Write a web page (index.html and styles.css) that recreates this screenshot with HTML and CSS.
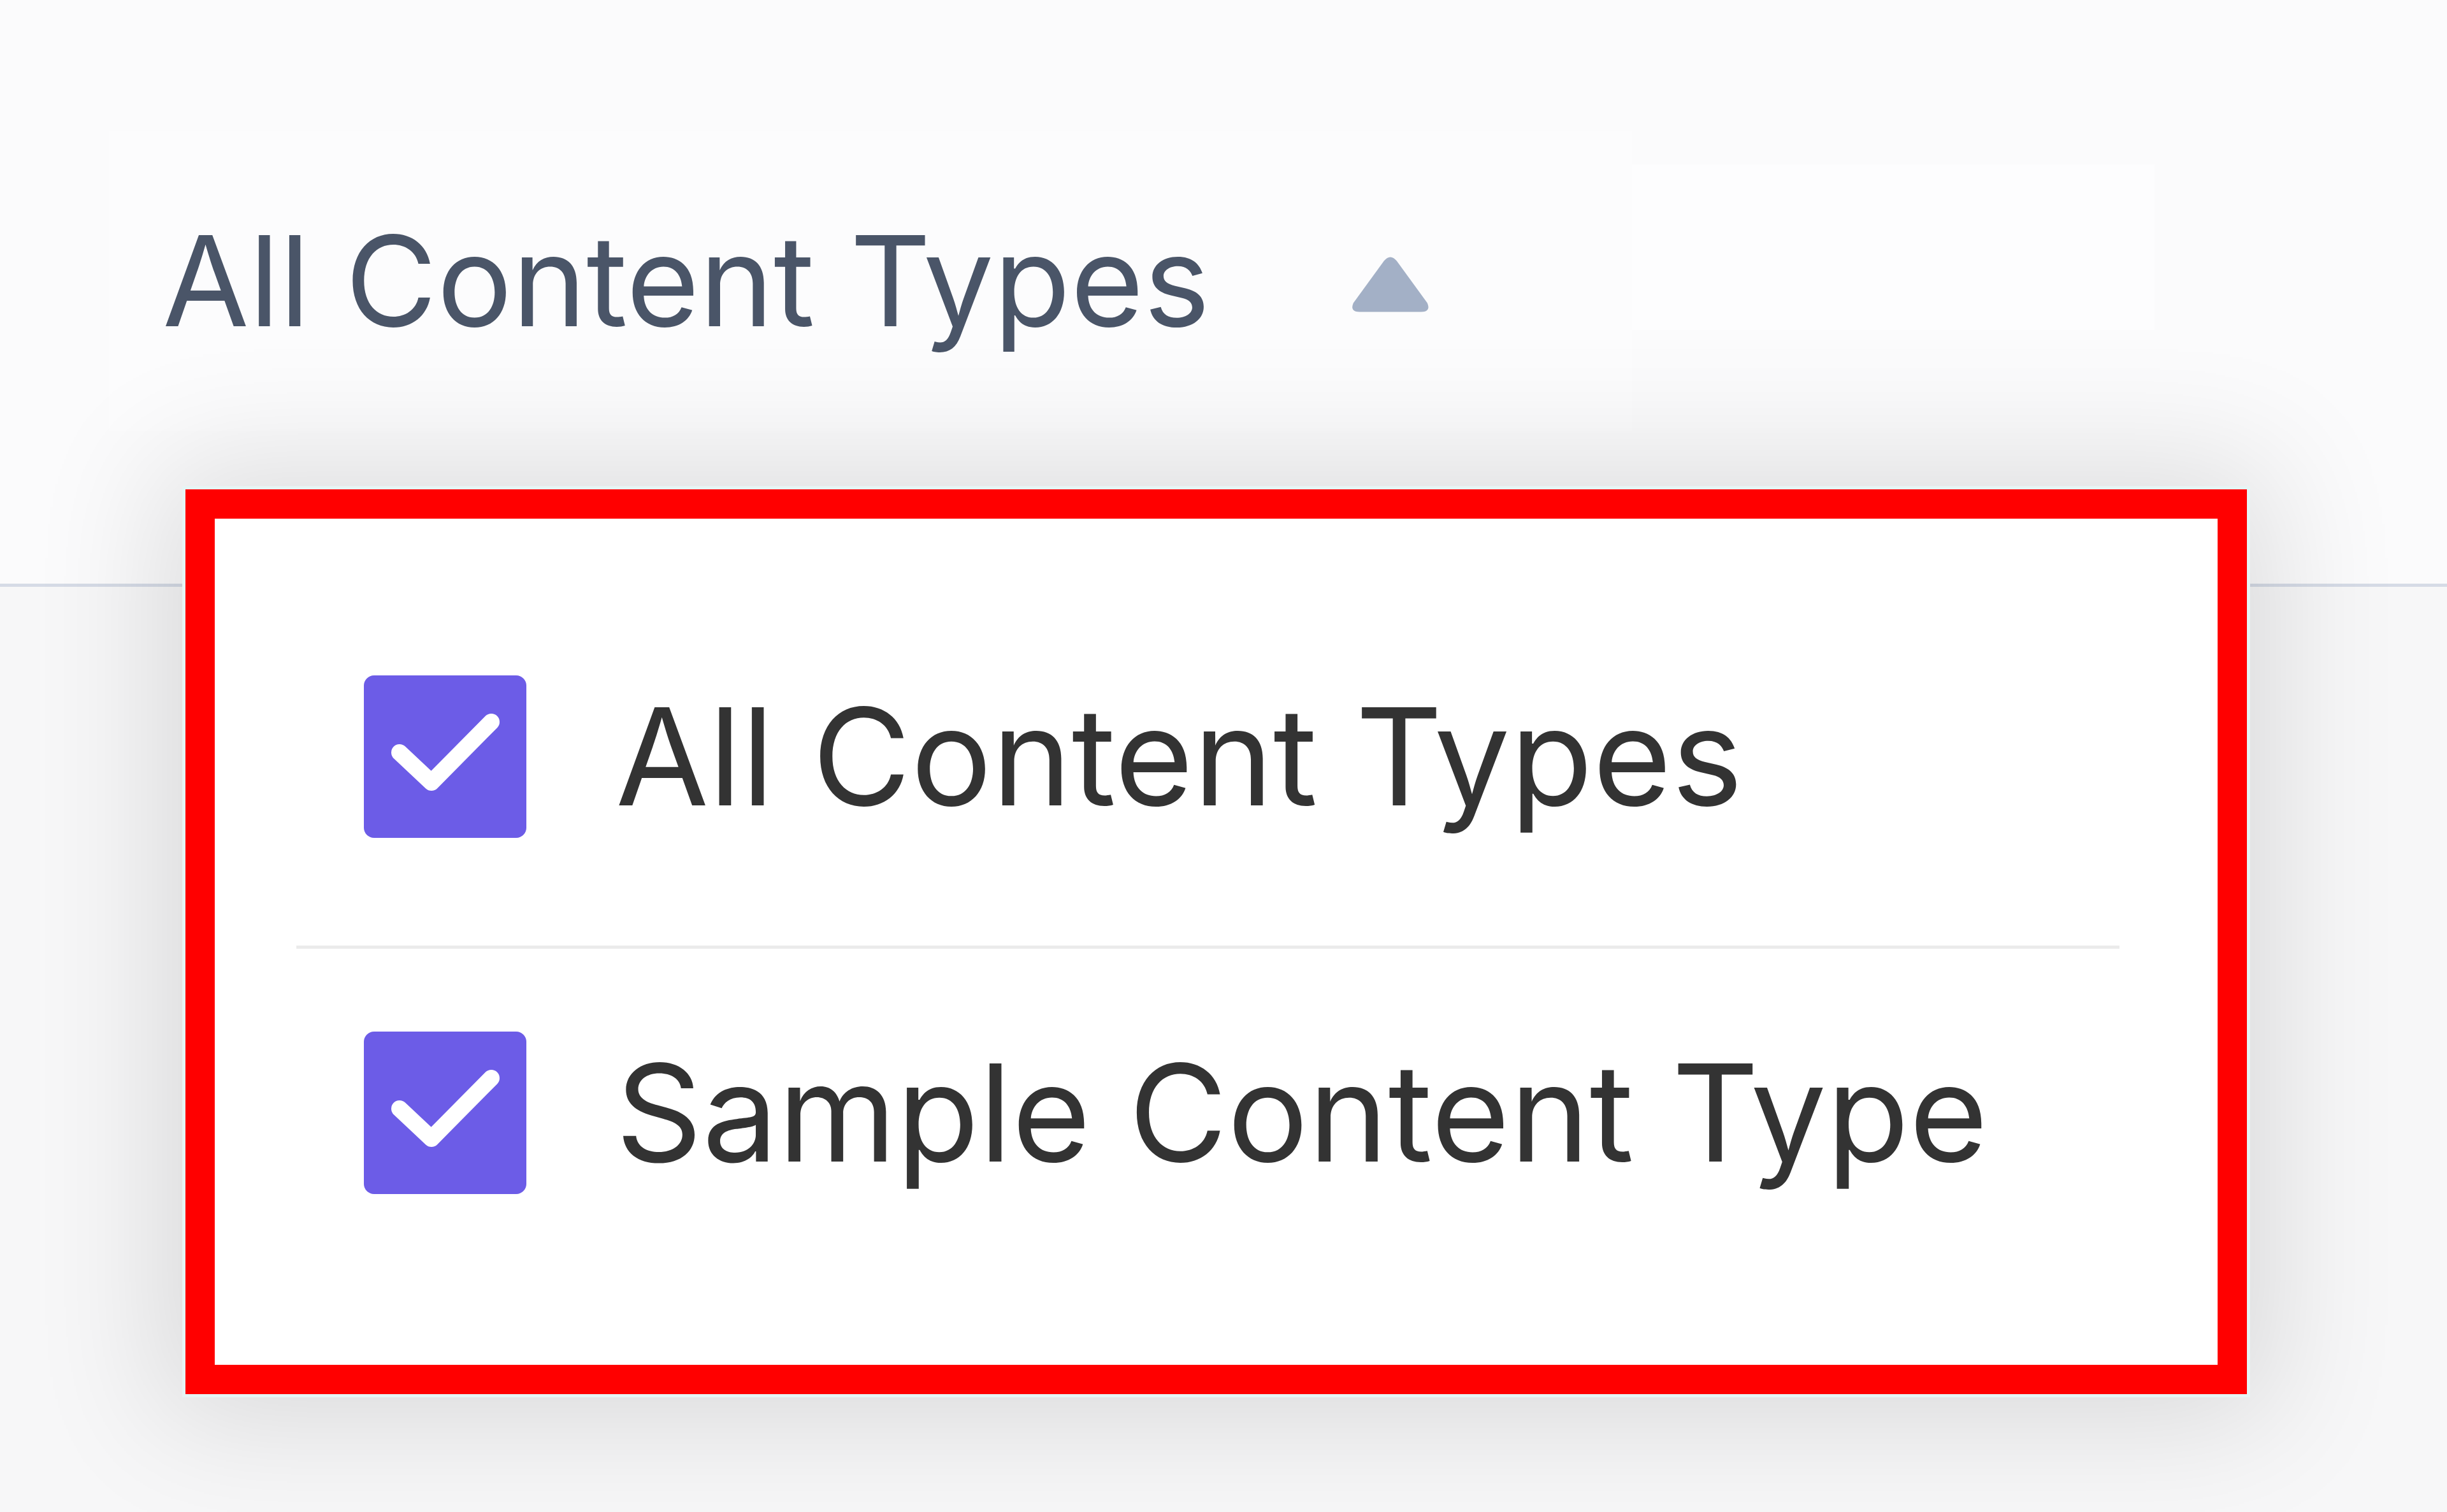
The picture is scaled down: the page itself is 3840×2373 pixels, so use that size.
FILE: index.html
```html
<!DOCTYPE html>
<html lang="en">
<head>
    <meta charset="UTF-8">
    <meta name="viewport" content="width=device-width, initial-scale=1.0">
    <title>Content Types</title>
    <link rel="stylesheet" href="styles.css">
</head>
<body>
    <div class="toolbar">
        <div class="type-select">
            <button class="select-button">
                <span class="select-label">All Content Types</span>
                <span class="caret"></span>
            </button>

            <div class="type-menu">
                <label class="option">
                    <span class="checkbox">
                        <svg viewBox="0 0 255 255" aria-hidden="true">
                            <path d="M56 121 L106 168 L200 73" fill="none" stroke="#fff" stroke-width="26" stroke-linecap="round" stroke-linejoin="round"/>
                        </svg>
                    </span>
                    <span class="option-label">All Content Types</span>
                </label>
                <div class="divider"></div>
                <label class="option">
                    <span class="checkbox">
                        <svg viewBox="0 0 255 255" aria-hidden="true">
                            <path d="M56 121 L106 168 L200 73" fill="none" stroke="#fff" stroke-width="26" stroke-linecap="round" stroke-linejoin="round"/>
                        </svg>
                    </span>
                    <span class="option-label">Sample Content Type</span>
                </label>
            </div>
        </div>
        <div class="search-box"></div>
    </div>
</body>
</html>
```

FILE: styles.css
```css
body {
    margin: 0;
    background-color: #f7f7f8;
    font-family: Inter, "Noto Sans", sans-serif;
    height: 100vh;
    overflow: hidden;
}

.toolbar {
    display: flex;
    align-items: flex-start;
    height: 921px;
    padding-left: 171px;
    box-sizing: border-box;
    background: #fbfbfc;
    border-bottom: 5px solid #d6dbe6;
}

.type-select {
    position: relative;
    margin-top: 205px;
}

.select-button {
    display: flex;
    align-items: center;
    gap: 221px;
    width: 2390px;
    padding: 116px 84px;
    border: none;
    background: #fcfcfd;
    font-family: inherit;
    cursor: pointer;
}

.select-label {
    font-size: 197px;
    color: #4a5568;
    line-height: normal;
}

.caret {
    display: block;
    width: 124px;
    height: 90px;
    margin-top: 12px;
    background-color: #a3b0c6;
    clip-path: path("M52 8 Q62 -4 72 8 L120 74 Q126 88 110 88 L14 88 Q-2 88 4 74 Z");
}

.search-box {
    width: 820px;
    height: 260px;
    margin-top: 258px;
    background: #fdfdfe;
}

.type-menu {
    position: absolute;
    left: 120px;
    top: 563px;
    width: 3235px;
    box-sizing: border-box;
    padding: 116px 154px 139px 128px;
    background: #fff;
    border: 46px solid #ff0000;
    box-shadow: 0 0 0 5px #e6f5f5, 0 0 190px 40px rgba(0, 0, 0, 0.12);
    z-index: 2;
}

.option {
    display: flex;
    align-items: center;
    gap: 140px;
    padding: 129px 0 129px 106px;
    cursor: pointer;
}

.checkbox {
    display: block;
    width: 255px;
    height: 255px;
    flex-shrink: 0;
    border-radius: 16px;
    background-color: #6c5ce7;
}

.checkbox svg {
    display: block;
    width: 100%;
    height: 100%;
}

.option-label {
    font-size: 212px;
    color: #333333;
    line-height: normal;
    white-space: nowrap;
}

.divider {
    height: 5px;
    margin-top: 40px;
    background-color: #ebebeb;
}
```
